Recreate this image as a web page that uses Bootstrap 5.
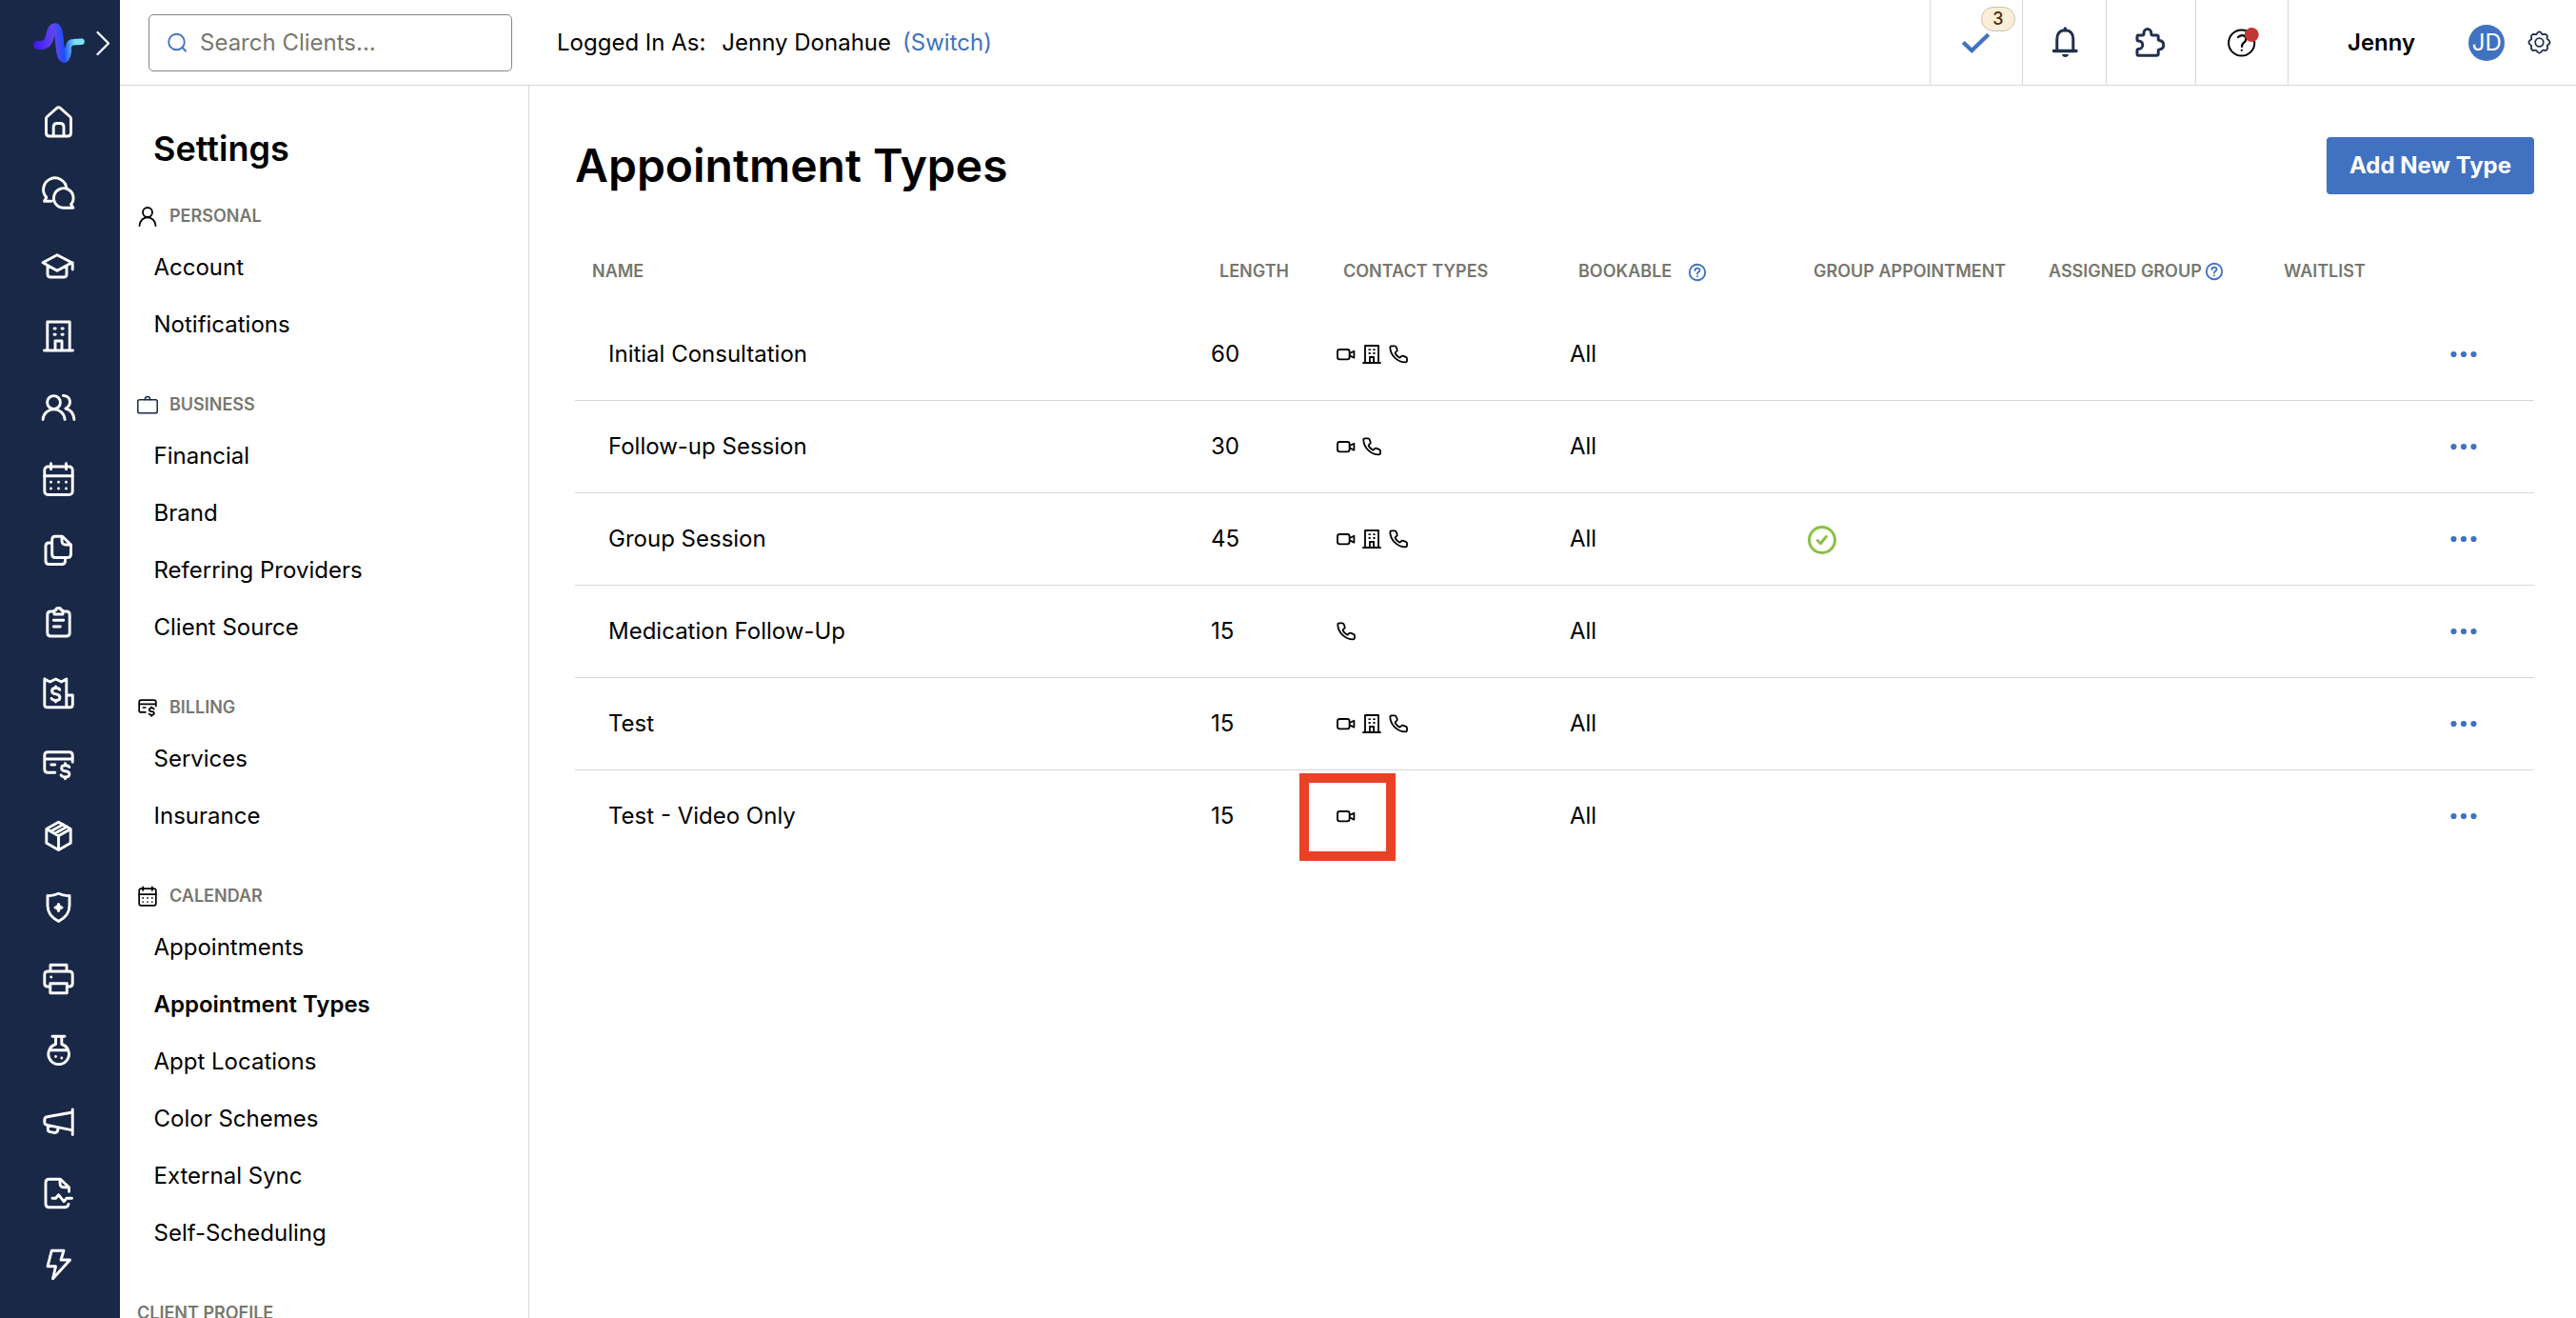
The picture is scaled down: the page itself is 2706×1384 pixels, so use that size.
<!DOCTYPE html>
<html lang="en">
<head>
<meta charset="utf-8">
<title>Appointment Types</title>
<link href="https://cdn.jsdelivr.net/npm/bootstrap@5.3.0/dist/css/bootstrap.min.css" rel="stylesheet">
<style>
body{font-family:Inter,"Liberation Sans",sans-serif;font-size:24px;line-height:1.2;color:#000;background:#fff;height:1384px;overflow:hidden}
svg{display:block;flex:none;fill:none;stroke:currentColor;stroke-linecap:round;stroke-linejoin:round}
.rail{width:126px;background:#1a2847}
.rail-link{height:75px;padding-right:4px;color:#fff}
.rail-link svg{width:41px;height:40px;stroke-width:2.9}
.topbar{height:90px;border-bottom:1px solid #d8d8da}
.search-box{width:382px;height:60px;margin:1px 47px 0 30px;border:1px solid #85868b;border-radius:5px;color:#77776f;padding-left:17px;gap:12px}
.search-box svg{width:24px;height:24px;stroke-width:1.9}
.session{padding-top:1px}
.session-user{margin:0 12px 0 17px}
.blue{color:#4072c1}
.top-cell{height:89px;border-left:1px solid #d8d8dc;color:#22304f}
.top-cell svg{width:80px;height:89px;stroke-width:3}
.w-97{width:97px}.w-88{width:88px}.w-94{width:94px}
.top-user{width:303px;padding-left:62px}
.top-user .gear{width:25px;height:25px;color:#22304f;stroke-width:1.8}
.user-name{padding-top:1px}
.count{right:7px;top:7px;width:36px;height:26px;border:1px solid #cdc1aa;border-radius:13px;background:#fbeed8;color:#45300f;font-size:18px;font-weight:500}
.avatar{width:38px;height:38px;padding-top:1px;background:#4072c1;color:#fff;margin-left:56px;margin-right:24px}
.side{width:430px;border-right:1px solid #d8d8da;overflow:hidden}
.side h2{font-size:36px;font-weight:600;line-height:44px;margin:44px 0 25px 35px}
.group-title{font-size:18px;font-weight:600;color:#77776f;height:47px;padding:1px 0 0 18px}
.group-title svg{width:24px;height:24px;margin-right:11px;margin-left:-1px;color:#000;stroke-width:1.8}
.group-title .bag{color:#1a2847;stroke-width:1.5}
.group-title .fine{stroke-width:2.9}
.side-link{height:60px;padding:2px 0 0 35.500px;color:#000}
.side-group{margin-bottom:31px}
.page{padding:54px 44px 0 48px}
.page h1{font-size:48px;font-weight:600}
.add{width:218px;height:60px;background:#4072c1;color:#fff;font-size:24px;font-weight:700;border-radius:4px;padding:0}
.types{margin-top:40px;table-layout:fixed;width:100%;border-collapse:separate;border-spacing:0}
.types th{height:80px;padding:2px 0 0 17px;font-size:18px;font-weight:600;color:#77776f;white-space:nowrap}
.types td{height:97px;padding:0 0 0 8px;border-bottom:1px solid #d6d6d6}
.types tr:last-child td{border-bottom-color:transparent}
.types th:first-child{padding-left:18px}
.types td:first-child{padding-left:35px}
.hint{width:20px;height:20px;stroke-width:1.9;margin-left:3px;margin-top:-1px}
.hint.low{margin:1px 0 0 17px}
.kinds{gap:3.5px;margin-left:-.5px}
.kinds svg{width:24px;height:24px;stroke-width:1.8}
.kinds svg.bldg{stroke-width:3}
.marker{left:-36.500px;top:-33px;width:101px;height:92px;border:10px solid #e94126}
.done{width:32px;height:32px;color:#8bbf45;margin-left:1px;stroke-width:3}
.more{width:30px;height:8px;fill:#4072c1;stroke:none;margin-left:51px}
</style>
</head>
<body class="d-flex">
<svg width="0" height="0" class="position-absolute">
<symbol id="home" viewBox="0 0 40 40"><path d="M7 16.8q0-1.4 1-2.3L18.3 5.4q1.7-1.4 3.4 0L32 14.5q1 .9 1 2.3V31.500q0 3.500-3.500 3.500h-19Q7 35 7 31.500ZM14.700 35V25.500q0-4 4-4h2.800q4 0 4 4V35"/></symbol>
<symbol id="chat" viewBox="0 0 40 40"><path d="M12.500 28.300H5l2.300-4A12.200 12.200 0 1 1 28.400 14.600M25 35.300h10.500l-2.400-3.600A10.300 10.300 0 1 0 25 35.300Z"/></symbol>
<symbol id="grad" viewBox="0 0 40 40"><path d="M3.500 17.800 18.500 9.800l15.500 8L18.500 26.300ZM8.500 21.500V30q0 3 3 3h14q3 0 3-3V21.500M34.700 18v7"/></symbol>
<symbol id="building" viewBox="0 0 40 40"><path d="M8.300 35V5h23.400v30M5 35h30M16.500 35V25h7v10"/><path d="M15.500 12h1.200M23.500 12h1.200M15.500 18.300h1.200M23.500 18.300h1.200"/></symbol>
<symbol id="people" viewBox="0 0 40 40"><circle cx="15" cy="14.500" r="6.900"/><path d="M3.600 32.500C4.500 18.300 25.700 18.300 26.600 32.500M24.800 7.400c8.700.5 9.300 9.800 2.600 13.600 5 1.300 8.600 5.500 9 11.500"/></symbol>
<symbol id="calendar" viewBox="0 0 40 40"><rect x="5.300" y="7" width="29.400" height="29.500" rx="3.500"/><path d="M5.300 16.700h29.400M12 3.800v6M28 3.800v6M12 23.200h.01M20 23.200h.01M28 23.200h.01M12 30h.01M20 30h.01M28 30h.01"/></symbol>
<symbol id="copy" viewBox="0 0 40 40"><path d="M16.500 5.200h7.500l9 8.800v10q0 3.500-3.500 3.500h-13Q13.200 27.500 13.200 24V8.500q0-3.300 3.300-3.300ZM23.500 5.500v4.500q0 4 4 4H33M13 12h-3q-3.500 0-3.500 3.500V31q0 3.500 3.500 3.500h13.500q3.500 0 3.500-3.500v-3"/></symbol>
<symbol id="clip" viewBox="0 0 40 40"><path d="M15 9h-3q-3.700 0-3.700 3.500v19q0 3.500 3.700 3.500h16q3.700 0 3.700-3.500v-19Q31.700 9 28 9h-3M15.500 12V9q0-1.500 2-1.500 0-2 2.500-2t2.500 2q2 0 2 1.500v3ZM14.800 18.300h10.500M14.800 25h7"/></symbol>
<symbol id="receipt" viewBox="0 0 40 40"><path d="M5.300 5 11 8l6-3 6 3 5.300-3V34.800M5.300 5V32q0 2.800 2.800 2.800H32q2.800 0 2.800-2.800V22h-6.200M21.300 16.200q-1-1.700-4.200-1.700-4 0-4 3t4 3.400q4.300.4 4.300 3.500t-4.300 3q-3.500 0-4.500-2M17 13v1.500M17 27.500v1.500"/></symbol>
<symbol id="card" viewBox="0 0 40 40"><path d="M34.700 17.300V10.300q0-3.500-3.500-3.500H8.800q-3.500 0-3.500 3.500v14.500q0 3.500 3.500 3.500h7.500M5.300 14h29.400M12.300 20h4M31.300 22.500q-1-1.700-4.200-1.700-4 0-4 2.800t4 3.200q4.300.4 4.300 3.300t-4.300 2.800q-3.500 0-4.500-2M27 18.800v2M27 33v1.800"/></symbol>
<symbol id="box" viewBox="0 0 40 40"><path d="M20 5.300 32.700 12.500v14.800L20 34.600 7.300 27.300V12.500ZM7.300 12.500 20 19.800l12.700-7.300M20 19.800v14.800M11.800 15l13-7.300M16 17.300l13-7.200"/></symbol>
<symbol id="shield" viewBox="0 0 40 40"><path d="M20 5.300Q14.500 8 8.500 7.500V18Q8.500 28.500 20 34.500 31.500 28.500 31.500 18V7.500Q25.500 8 20 5.300Z"/><path d="M20 16.500 21 19l2.500 1-2.500 1-1 2.500-1-2.500-2.500-1 2.500-1Z"/></symbol>
<symbol id="print" viewBox="0 0 40 40"><path d="M10.800 28H8.800q-3.500 0-3.500-3.500V15.500q0-3.500 3.500-3.500h22.400q3.500 0 3.500 3.500v9q0 3.500-3.500 3.500h-2M11.500 12V5.300h17V12M11.300 24.800h17.500v10H11.300ZM12.200 18h.01"/></symbol>
<symbol id="flask" viewBox="0 0 40 40"><path d="M13.500 5.200h13M17 5.200v8.300a10.800 10.800 0 1 0 6.300 0V5.200M10.500 19.700h19M17 26.500h.01M23.300 28h.01"/></symbol>
<symbol id="horn" viewBox="0 0 40 40"><path d="M34.700 7v26.500M34.700 10 8 14.800q-2.700.5-2.700 3v2.700q0 2.400 2.700 2.800L34.700 28.800M8.800 23.800v4q0 2.400 2.500 2.800l4 .8q3.500.4 4-3v-2.200"/></symbol>
<symbol id="file" viewBox="0 0 40 40"><path d="M31 18.200V13.800L22 5.300H10.200Q6.500 5.300 6.500 8.800v22.500q0 3.500 3.700 3.500H26.500q3.300 0 4-3.300M21.500 5.500v4q0 4.300 4.500 4.300h4.500M13.500 25.200h3.500l3-3.500 5.500 7 3-3.500H34"/></symbol>
<symbol id="bolt" viewBox="0 0 40 40"><path d="M12.800 5.200H25.500L22.500 15H32L14 34.800l3-13H8.500Z"/></symbol>
<symbol id="video" viewBox="0 0 24 24"><rect x="3" y="7" width="12.600" height="10.400" rx="2.300"/><path d="M15.800 11l4.600-2.300v7L15.800 13.400"/></symbol>
<symbol id="phone" viewBox="0 0 24 24"><path d="M3.300 4.800Q3.300 3.300 4.800 3.300H8Q9.200 3.300 9.700 4.500L10.600 7q.5 1.300-.6 2.100L9 9.900q-.7.600-.3 1.400 1.500 2.700 4.200 4.100.7.300 1.200-.2l1-1q.9-.8 2-.4l2.700 1.100q1.200.5 1.200 1.700v2q0 1.800-1.700 1.800C11 20.400 3.300 12.800 3.300 4.800Z"/></symbol>
<symbol id="help" viewBox="0 0 20 20"><circle cx="10" cy="10" r="8.200"/><path d="M7.500 8q.2-2.400 2.500-2.400t2.500 2.100q0 1.300-1.400 2.100-1 .6-1.100 1.700M10 14.200h.01"/></symbol>
<symbol id="dots" viewBox="0 0 30 8"><circle cx="4.500" cy="4" r="3.100"/><circle cx="15" cy="4" r="3.100"/><circle cx="25.500" cy="4" r="3.100"/></symbol>
</svg>

<nav class="rail d-flex flex-column flex-shrink-0 overflow-hidden">
  <a href="#" aria-label="Home">
    <svg width="126" height="90" viewBox="0 0 126 90">
      <defs><linearGradient id="pulse" gradientUnits="userSpaceOnUse" x1="35" y1="48" x2="89" y2="43"><stop offset="0" stop-color="#4110f5"/><stop offset=".25" stop-color="#5534ee"/><stop offset=".42" stop-color="#6146ea"/><stop offset=".58" stop-color="#1f4dfa"/><stop offset=".7" stop-color="#4a9cf8"/><stop offset=".8" stop-color="#77dcf8"/><stop offset="1" stop-color="#7ee8fb"/></linearGradient></defs>
      <g stroke="url(#pulse)"><path stroke-width="9" d="M39.500 47.300C48 48.300 50.500 45.500 52.500 38 53.800 27 60.800 25 61.800 37L63 49C64 63.500 69 65 70.500 54"/><path stroke-width="6.500" d="M70.500 57C72 45.500 73.500 44.300 77 44.300L85.500 43.800"/></g>
      <path stroke="#fff" stroke-width="2.300" d="M102.500 34 114 45.500 102.500 57"/>
    </svg>
  </a>
  <a class="rail-link d-flex align-items-center justify-content-center" href="#"><svg><use href="#home"/></svg></a>
  <a class="rail-link d-flex align-items-center justify-content-center" href="#"><svg><use href="#chat"/></svg></a>
  <a class="rail-link d-flex align-items-center justify-content-center" href="#"><svg><use href="#grad"/></svg></a>
  <a class="rail-link d-flex align-items-center justify-content-center" href="#"><svg><use href="#building"/></svg></a>
  <a class="rail-link d-flex align-items-center justify-content-center" href="#"><svg><use href="#people"/></svg></a>
  <a class="rail-link d-flex align-items-center justify-content-center" href="#"><svg><use href="#calendar"/></svg></a>
  <a class="rail-link d-flex align-items-center justify-content-center" href="#"><svg><use href="#copy"/></svg></a>
  <a class="rail-link d-flex align-items-center justify-content-center" href="#"><svg><use href="#clip"/></svg></a>
  <a class="rail-link d-flex align-items-center justify-content-center" href="#"><svg><use href="#receipt"/></svg></a>
  <a class="rail-link d-flex align-items-center justify-content-center" href="#"><svg><use href="#card"/></svg></a>
  <a class="rail-link d-flex align-items-center justify-content-center" href="#"><svg><use href="#box"/></svg></a>
  <a class="rail-link d-flex align-items-center justify-content-center" href="#"><svg><use href="#shield"/></svg></a>
  <a class="rail-link d-flex align-items-center justify-content-center" href="#"><svg><use href="#print"/></svg></a>
  <a class="rail-link d-flex align-items-center justify-content-center" href="#"><svg><use href="#flask"/></svg></a>
  <a class="rail-link d-flex align-items-center justify-content-center" href="#"><svg><use href="#horn"/></svg></a>
  <a class="rail-link d-flex align-items-center justify-content-center" href="#"><svg><use href="#file"/></svg></a>
  <a class="rail-link d-flex align-items-center justify-content-center" href="#"><svg><use href="#bolt"/></svg></a>
</nav>

<div class="d-flex flex-column flex-grow-1">
  <header class="topbar d-flex align-items-center flex-shrink-0">
    <div class="search-box d-flex align-items-center">
      <svg class="blue" viewBox="0 0 24 24"><circle cx="11.500" cy="11" r="8.300"/><path d="M17.500 17 21 20.500"/></svg>
      <span>Search Clients...</span>
    </div>
    <div class="session d-flex">
      <span>Logged In As:</span>
      <span class="session-user">Jenny Donahue</span>
      <a href="#" class="blue text-decoration-none">(Switch)</a>
    </div>
    <div class="top-cell w-97 ms-auto position-relative d-flex justify-content-center">
      <svg viewBox="0 0 80 89" class="blue"><path stroke-width="4.300" stroke-linecap="butt" stroke-linejoin="miter" d="M26.300 44.500 35.300 53 52.800 36.300"/></svg>
      <span class="count position-absolute d-flex align-items-center justify-content-center">3</span>
    </div>
    <div class="top-cell w-88 d-flex justify-content-center">
      <svg viewBox="0 0 80 89"><path d="M31.800 53.500V41q0-9 8.500-9.300 8.500.3 8.500 9.300V53.500"/><path d="M28.500 53.500h23.500M40.300 30v1.500" stroke-width="3.500"/><path fill="currentColor" stroke="none" d="M37 57h7q-.5 3-3.500 3T37 57Z"/></svg>
    </div>
    <div class="top-cell w-94 d-flex justify-content-center">
      <svg viewBox="0 0 80 89"><path d="M25 38.500q0-1.500 1.500-1.500H30.500q1.500 0 1.500-1.500V34.500a3.900 3.900 0 0 1 7.800 0v1q0 1.500 1.500 1.500H45.500q1.700 0 1.700 1.700V41q0 1.500 1.500 1.500 4 .8 4 4.700t-4 4.700q-1.500 0-1.500 1.500V56.500q0 1.700-1.700 1.700H26.500q-1.500 0-1.500-1.500V53q0-1.500 1.500-1.500a4.300 4.300 0 0 0 0-8.600Q25 42.900 25 41.500Z"/></svg>
    </div>
    <div class="top-cell w-97 d-flex justify-content-center text-black">
      <svg viewBox="0 0 80 89"><circle cx="39.700" cy="45" r="13.600" stroke-width="2"/><path stroke-width="2.200" d="M36 39q4-3.300 7.300-.8 2.500 2.700-.5 6-2.800 2-2.800 4.800M39.800 52.800h.01"/><circle cx="50.300" cy="36.500" r="7.400" fill="#c23632" stroke="none"/></svg>
    </div>
    <div class="top-cell top-user d-flex align-items-center text-black">
      <span class="user-name fw-semibold">Jenny</span>
      <span class="avatar rounded-circle d-flex align-items-center justify-content-center">JD</span>
      <svg class="gear" viewBox="-12.500 -12.500 25 25"><circle r="4.300"/><path d="M-1.800-10.200Q0-12 1.800-10.200L2.800-8.300 5.900-8.700Q8.300-8.300 8.400-6.200L7.900-4.200 10.200-1.800Q11.800 0 10.200 1.800L8.300 3.300 8.600 5.800Q8.200 8.300 5.900 8.600L3.800 8 1.800 10.200Q0 12-1.800 10.200L-3.400 8.200-5.900 8.600Q-8.300 8.200-8.600 5.800L-8.200 3.600-10.200 1.800Q-12 0-10.200-1.800L-8.200-3.500-8.600-5.900Q-8.200-8.400-5.800-8.600L-3.500-8.200Z"/></svg>
    </div>
  </header>

  <div class="d-flex flex-grow-1">
    <aside class="side flex-shrink-0">
      <h2>Settings</h2>
      <div class="side-group">
        <div class="group-title d-flex align-items-center"><svg viewBox="0 0 24 24"><circle cx="12" cy="8" r="5"/><path d="M3.500 22c.8-11.500 16.200-11.500 17 0"/></svg>PERSONAL</div>
        <a href="#" class="side-link d-flex align-items-center text-decoration-none">Account</a>
        <a href="#" class="side-link d-flex align-items-center text-decoration-none">Notifications</a>
      </div>
      <div class="side-group">
        <div class="group-title d-flex align-items-center"><svg class="bag" viewBox="0 0 24 24"><rect x="1.800" y="6.700" width="20.400" height="14" rx="1.800"/><path d="M9.300 6.700q0-3.200 2.700-3.200t2.700 3.200"/></svg>BUSINESS</div>
        <a href="#" class="side-link d-flex align-items-center text-decoration-none">Financial</a>
        <a href="#" class="side-link d-flex align-items-center text-decoration-none">Brand</a>
        <a href="#" class="side-link d-flex align-items-center text-decoration-none">Referring Providers</a>
        <a href="#" class="side-link d-flex align-items-center text-decoration-none">Client Source</a>
      </div>
      <div class="side-group">
        <div class="group-title d-flex align-items-center"><svg class="fine"><use href="#card"/></svg>BILLING</div>
        <a href="#" class="side-link d-flex align-items-center text-decoration-none">Services</a>
        <a href="#" class="side-link d-flex align-items-center text-decoration-none">Insurance</a>
      </div>
      <div class="side-group">
        <div class="group-title d-flex align-items-center"><svg class="fine"><use href="#calendar"/></svg>CALENDAR</div>
        <a href="#" class="side-link d-flex align-items-center text-decoration-none">Appointments</a>
        <a href="#" class="side-link d-flex align-items-center text-decoration-none fw-semibold">Appointment Types</a>
        <a href="#" class="side-link d-flex align-items-center text-decoration-none">Appt Locations</a>
        <a href="#" class="side-link d-flex align-items-center text-decoration-none">Color Schemes</a>
        <a href="#" class="side-link d-flex align-items-center text-decoration-none">External Sync</a>
        <a href="#" class="side-link d-flex align-items-center text-decoration-none">Self-Scheduling</a>
      </div>
      <div class="group-title d-flex align-items-center">CLIENT PROFILE</div>
    </aside>

    <main class="page flex-grow-1">
      <div class="d-flex align-items-center justify-content-between">
        <h1 class="m-0">Appointment Types</h1>
        <button class="btn add">Add New Type</button>
      </div>
      <table class="types">
        <colgroup><col style="width:660px"><col style="width:130px"><col style="width:247px"><col style="width:247px"><col style="width:247px"><col style="width:247px"><col style="width:132px"><col></colgroup>
        <thead>
          <tr>
            <th>NAME</th><th>LENGTH</th><th>CONTACT TYPES</th>
            <th><div class="d-flex align-items-center">BOOKABLE<svg class="hint low blue"><use href="#help"/></svg></div></th>
            <th>GROUP APPOINTMENT</th>
            <th><div class="d-flex align-items-center">ASSIGNED GROUP<svg class="hint blue"><use href="#help"/></svg></div></th>
            <th>WAITLIST</th><th></th>
          </tr>
        </thead>
        <tbody>
          <tr><td>Initial Consultation</td><td>60</td><td><div class="kinds d-flex"><svg><use href="#video"/></svg><svg class="bldg"><use href="#building"/></svg><svg><use href="#phone"/></svg></div></td><td>All</td><td></td><td></td><td></td><td><svg class="more"><use href="#dots"/></svg></td></tr>
          <tr><td>Follow-up Session</td><td>30</td><td><div class="kinds d-flex"><svg><use href="#video"/></svg><svg><use href="#phone"/></svg></div></td><td>All</td><td></td><td></td><td></td><td><svg class="more"><use href="#dots"/></svg></td></tr>
          <tr><td>Group Session</td><td>45</td><td><div class="kinds d-flex"><svg><use href="#video"/></svg><svg class="bldg"><use href="#building"/></svg><svg><use href="#phone"/></svg></div></td><td>All</td><td><svg class="done" viewBox="0 0 32 32"><circle cx="17" cy="17" r="13.500"/><path d="M12.300 17.500 15.500 20.700 21.300 13.500"/></svg></td><td></td><td></td><td><svg class="more"><use href="#dots"/></svg></td></tr>
          <tr><td>Medication Follow-Up</td><td>15</td><td><div class="kinds d-flex"><svg><use href="#phone"/></svg></div></td><td>All</td><td></td><td></td><td></td><td><svg class="more"><use href="#dots"/></svg></td></tr>
          <tr><td>Test</td><td>15</td><td><div class="kinds d-flex"><svg><use href="#video"/></svg><svg class="bldg"><use href="#building"/></svg><svg><use href="#phone"/></svg></div></td><td>All</td><td></td><td></td><td></td><td><svg class="more"><use href="#dots"/></svg></td></tr>
          <tr><td>Test - Video Only</td><td>15</td><td><div class="kinds d-flex position-relative"><svg><use href="#video"/></svg><span class="marker position-absolute"></span></div></td><td>All</td><td></td><td></td><td></td><td><svg class="more"><use href="#dots"/></svg></td></tr>
        </tbody>
      </table>
    </main>
  </div>
</div>
<script src="https://cdn.jsdelivr.net/npm/bootstrap@5.3.0/dist/js/bootstrap.bundle.min.js"></script>
</body>
</html>
